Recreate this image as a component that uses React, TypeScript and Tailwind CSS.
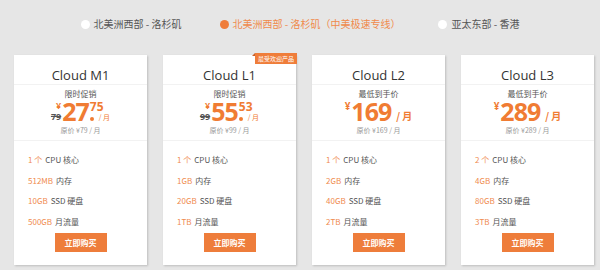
import React from "react";

const tabs = [
  { label: "北美洲西部 - 洛杉矶", active: false },
  { label: "北美洲西部 - 洛杉矶（中美极速专线）", active: true },
  { label: "亚太东部 - 香港", active: false },
];

type Plan = {
  name: string;
  tag: string;
  whole: string;
  cents?: string;
  old?: string;
  origin: string;
  hot?: boolean;
  specs: [string, string][];
};

const plans: Plan[] = [
  {
    name: "Cloud M1",
    tag: "限时促销",
    whole: "27",
    cents: "75",
    old: "79",
    origin: "原价 ¥79 / 月",
    specs: [["1 个", "CPU 核心"], ["512MB", "内存"], ["10GB", "SSD 硬盘"], ["500GB", "月流量"]],
  },
  {
    name: "Cloud L1",
    tag: "限时促销",
    whole: "55",
    cents: "53",
    old: "99",
    origin: "原价 ¥99 / 月",
    hot: true,
    specs: [["1 个", "CPU 核心"], ["1GB", "内存"], ["20GB", "SSD 硬盘"], ["1TB", "月流量"]],
  },
  {
    name: "Cloud L2",
    tag: "最低到手价",
    whole: "169",
    origin: "原价 ¥169 / 月",
    specs: [["1 个", "CPU 核心"], ["2GB", "内存"], ["40GB", "SSD 硬盘"], ["2TB", "月流量"]],
  },
  {
    name: "Cloud L3",
    tag: "最低到手价",
    whole: "289",
    origin: "原价 ¥289 / 月",
    specs: [["2 个", "CPU 核心"], ["4GB", "内存"], ["80GB", "SSD 硬盘"], ["3TB", "月流量"]],
  },
];

const cjk = { fontFamily: '"Noto Sans CJK SC", sans-serif' };
const latin = { fontFamily: '"Open Sans", "Noto Sans CJK SC", sans-serif' };

function Price({ plan }: { plan: Plan }) {
  if (plan.cents) {
    return (
      <div className="flex items-stretch h-[20px] text-[#f07c33] font-bold" style={latin}>
        <div className="flex flex-col justify-between items-end mr-[1px]">
          <span className="text-[9px] leading-[9px]">¥</span>
          <span className="text-[9px] leading-[9px] text-[#555] line-through">{plan.old}</span>
        </div>
        <span className="text-[25px] leading-[20px] tracking-[-1px]">{plan.whole}</span>
        <div className="relative flex flex-col ml-[1px]">
          <span className="text-[12px] leading-[11px]">{plan.cents}</span>
          <span className="absolute left-0 bottom-0 w-[4px] h-[4px] rounded-full bg-[#f07c33]" />
          <span className="mt-auto ml-[9px] text-[7px] leading-[8px] font-normal" style={cjk}>
            / 月
          </span>
        </div>
      </div>
    );
  }
  return (
    <div className="flex items-stretch h-[20px] text-[#f07c33] font-bold" style={latin}>
      <span className="text-[10px] leading-[10px] mr-[1px]">¥</span>
      <span className="text-[25px] leading-[20px] tracking-[-1px]">{plan.whole}</span>
      <span className="self-end text-[10px] leading-[10px] ml-[5px]" style={cjk}>
        / 月
      </span>
    </div>
  );
}

function Card({ plan }: { plan: Plan }) {
  return (
    <div className="relative w-[133px] h-[210px] bg-white flex flex-col shadow-[1px_1px_2px_rgba(0,0,0,0.18)]">
      {plan.hot && (
        <div className="absolute top-[-2px] right-[-1px] h-[11px] px-[3px] bg-[#ef7d3a] text-white text-[6px] leading-[11px]">
          <span className="absolute left-[-3px] top-0 w-0 h-0 border-t-[3px] border-t-transparent border-r-[3px] border-r-[#c9602a]" />
          最受欢迎产品
        </div>
      )}
      <div
        className="h-[30px] flex items-end justify-center pb-[1px] border-b border-[#f2f2f2] text-[13px] leading-[16px] text-[#333]"
        style={latin}
      >
        {plan.name}
      </div>
      <div className="flex flex-col items-center pt-[4px] pb-[5px] border-b border-[#f2f2f2]">
        <span className="text-[8px] leading-[10px] text-[#555]">{plan.tag}</span>
        <div className="mt-[2px]">
          <Price plan={plan} />
        </div>
        <span className="mt-[4px] text-[7px] leading-[10px] text-[#999]">{plan.origin}</span>
      </div>
      <div className="flex flex-col pl-[14px] pt-[9px] text-[8px]">
        {plan.specs.map(([a, b]) => (
          <div key={b} className="h-[20.5px] flex items-center">
            <span className="text-[#f08b4f]">{a}</span>
            <span className="ml-[3px] text-[#555]">{b}</span>
          </div>
        ))}
      </div>
      <div className="flex justify-center mt-[1px]">
        <button className="w-[52px] h-[19px] bg-[#ee7d3b] text-white text-[8px] font-bold">立即购买</button>
      </div>
    </div>
  );
}

export default function App() {
  return (
    <div className="w-[600px] h-[270px] bg-[#e6e6e6] overflow-hidden" style={cjk}>
      <div className="flex justify-center items-center gap-[38px] pt-[18px] pb-[25px] h-[55px] text-[10px] leading-[12px]">
        {tabs.map((t) => (
          <div key={t.label} className="flex items-center">
            <span
              className={
                t.active
                  ? "w-[9px] h-[9px] rounded-full bg-[#ef7d3a]"
                  : "w-[9px] h-[9px] rounded-full bg-white"
              }
            />
            <span className={t.active ? "ml-[4px] text-[#f08a4b]" : "ml-[4px] text-[#555]"}>{t.label}</span>
          </div>
        ))}
      </div>
      <div className="flex gap-[16px] pl-[14px]">
        {plans.map((p) => (
          <Card key={p.name} plan={p} />
        ))}
      </div>
    </div>
  );
}
